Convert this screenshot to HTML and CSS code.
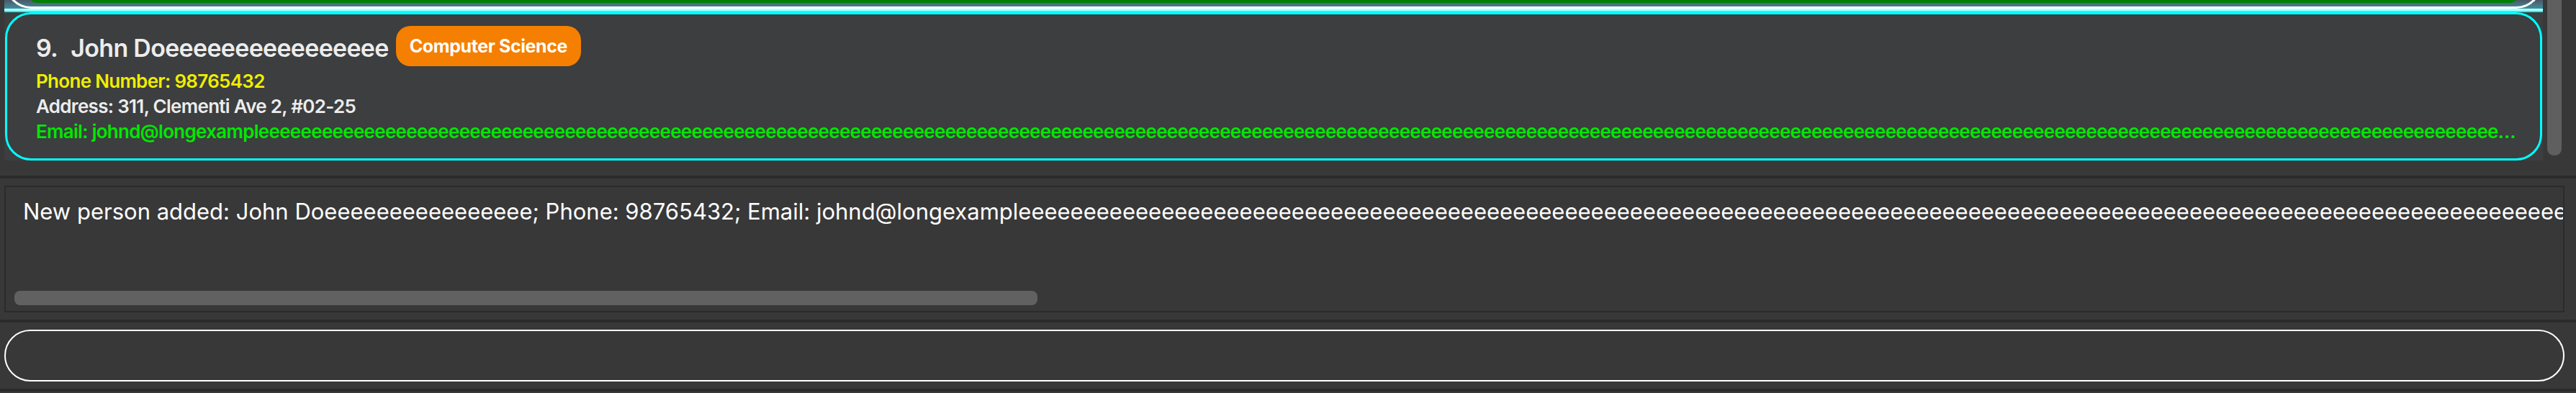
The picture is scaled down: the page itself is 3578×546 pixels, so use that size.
FILE: index.html
```html
<!DOCTYPE html>
<html>
<head>
<meta charset="utf-8">
<link rel="stylesheet" href="styles.css">
</head>
<body>
<div class="app">
  <div class="list-pane">
    <div class="list-viewport">
      <div class="cell-prev">
        <div class="prev-card"><div class="prev-green"></div></div>
        <div class="prev-line1"></div>
        <div class="prev-line2"></div>
      </div>
      <div class="cell">
        <div class="card">
          <div class="name-row">
            <div class="name"><span class="idx">9.</span><span>John Doeeeeeeeeeeeeeeee</span></div>
            <div class="tag">Computer Science</div>
          </div>
          <div class="details">
            <div class="phone">Phone Number: 98765432</div>
            <div class="address">Address: 311, Clementi Ave 2, #02-25</div>
            <div class="email">Email: johnd@longexampleeeeeeeeeeeeeeeeeeeeeeeeeeeeeeeeeeeeeeeeeeeeeeeeeeeeeeeeeeeeeeeeeeeeeeeeeeeeeeeeeeeeeeeeeeeeeeeeeeeeeeeeeeeeeeeeeeeeeeeeeeeeeeeeeeeeeeeeeeeeeeeeeeeeeeeeeeeeeeeeeeeeeeeeeeeeeeeeeeeeeeeeeeeeeeeeeeeeeeeeeeeeeeeeeeeeeeeeeeeeeeeeeeeeeeeeeeeeeeeeeeeeeeeeeeeeeeeeeeeeeeeeeeeeeeeeeeeeeeeeeeeeeeeeeeeeeee.com</div>
          </div>
        </div>
      </div>
    </div>
    <div class="vscroll"><div class="vthumb"></div></div>
  </div>
  <div class="divider"></div>
  <div class="result-pane">
    <div class="result-box">
      <div class="result-text">New person added: John Doeeeeeeeeeeeeeeee; Phone: 98765432; Email: johnd@longexampleeeeeeeeeeeeeeeeeeeeeeeeeeeeeeeeeeeeeeeeeeeeeeeeeeeeeeeeeeeeeeeeeeeeeeeeeeeeeeeeeeeeeeeeeeeeeeeeeeeeeeeeeeeeeeeeeeeeeeeeeeeeeeeeeeeeeeeeeeeeeeeeeeeeeeeeeeeeeeeeeeeeeeeeeeeeeeeeeeeeeeeeeeeeeeeeeeeeeeeeeeeeeeeeeeeeeeeeeeeeeeeeeeeeeeeeeeeeeeeeeeeeeeeeeeeeeeeeeeeeeeeeeeeeeee.com; Address: 311, Clementi Ave 2, #02-25; Tags: [Computer Science]</div>
      <div class="hscroll"><div class="hthumb"></div></div>
    </div>
  </div>
  <div class="divider"></div>
  <div class="command-pane">
    <div class="command-box"></div>
  </div>
  <div class="divider"></div>
</div>
</body>
</html>
```
FILE: styles.css
```css
* { box-sizing: border-box; }
html, body { margin: 0; padding: 0; }
body {
  background: #383838;
  font-family: "Inter", "Liberation Sans", sans-serif;
  width: 3578px;
  height: 546px;
  overflow: hidden;
}
.app { display: flex; flex-direction: column; height: 546px; }

.list-pane {
  height: 244px;
  flex: none;
  display: flex;
  padding: 0 16px 0 6px;
  overflow: hidden;
}
.list-viewport {
  flex: 1;
  min-width: 0;
  overflow: hidden;
  display: flex;
  flex-direction: column;
}
.vscroll { width: 30px; flex: none; padding: 0 4px 0 6px; }
.vthumb {
  width: 20px;
  height: 226px;
  margin-top: -10px;
  background: #5f5f5f;
  border-radius: 9px;
}

.cell-prev {
  height: 17px;
  flex: none;
  overflow: hidden;
  display: flex;
  flex-direction: column;
  justify-content: flex-end;
  background: linear-gradient(#4d5767, #3e8f9d 12px);
}
.prev-card {
  flex: none;
  height: 82px;
  margin: 0 1px;
  border: 3px solid #ffffff;
  border-top: 0;
  border-radius: 0 0 36px 36px;
  padding: 0 30px 5px;
  display: flex;
}
.prev-green { flex: 1; background: #008000; border-radius: 0 0 12px 12px; }
.prev-line1 { flex: none; height: 3px; background: #b2ffff; }
.prev-line2 { flex: none; height: 2px; background: #00ffff; }

.cell { flex: none; background: #3c3e3f; padding: 0 1px; }
.card {
  border: 3px solid #00ffff;
  border-radius: 36px;
  padding: 16px 33px 20px 40px;
}
.name-row { display: flex; align-items: flex-start; height: 56px; gap: 10px; }
.name {
  font-size: 34px;
  font-weight: 600;
  letter-spacing: -0.7px;
  color: #ececec;
  line-height: 50px;
  margin-top: 6px;
  white-space: nowrap;
}
.idx { margin-right: 18px; }
.tag {
  height: 56px;
  padding: 0 19px;
  border-radius: 20px;
  background: #f57f00;
  color: #ffffff;
  font-size: 25px;
  font-weight: 700;
  letter-spacing: -0.4px;
  display: flex;
  align-items: center;
  white-space: nowrap;
}
.details {
  margin-top: 3px;
  font-size: 26px;
  font-weight: 600;
  letter-spacing: -0.7px;
  line-height: 35px;
}
.phone { color: #f0ee00; }
.address { color: #ececec; }
.email {
  color: #00e800;
  white-space: nowrap;
  overflow: hidden;
  text-overflow: ellipsis;
}

.divider { flex: none; height: 4px; background: #2b2b2b; }

.result-pane { flex: none; height: 196px; padding: 10px 16px 10px 6px; }
.result-box {
  height: 176px;
  border: 2px solid #2b2b2b;
  display: flex;
  flex-direction: column;
  overflow: hidden;
}
.result-text {
  flex: none;
  padding: 15px 2px 0 24px;
  font-size: 31px;
  line-height: 38px;
  color: #ffffff;
  white-space: nowrap;
  overflow: hidden;
}
.hscroll { margin-top: auto; padding: 0 0 8px 12px; }
.hthumb { width: 1421px; height: 20px; background: #616161; border-radius: 8px; }

.command-pane { flex: none; height: 92px; padding: 10px 16px 10px 6px; }
.command-box {
  height: 72px;
  border: 2px solid #ffffff;
  border-radius: 36px;
}
```
